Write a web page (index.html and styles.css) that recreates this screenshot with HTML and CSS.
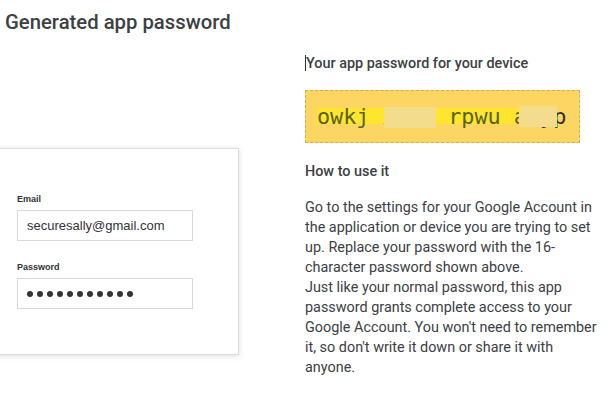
FILE: index.html
```html
<!DOCTYPE html>
<html lang="en">
<head>
  <meta charset="UTF-8" />
  <title>Generated app password</title>
  <link rel="stylesheet" href="styles.css">
</head>
<body>
  <h1 class="page-title">Generated app password</h1>
  <div class="layout">
    <div class="left-col">
      <div class="login-card">
        <div class="field-label">Email</div>
        <div class="field-box">securesally@gmail.com</div>
        <div class="field-label second">Password</div>
        <div class="field-box dots">
          <span></span><span></span><span></span><span></span><span></span><span></span>
          <span></span><span></span><span></span><span></span><span></span>
        </div>
      </div>
    </div>
    <div class="right-col">
      <h2 class="sub-title"><span class="caret"></span>Your app password for your device</h2>
      <div class="pw-box">
        <span class="pw-text"><span class="marker">owkj xxgx rpwu a</span>xyp</span>
        <span class="blur blur-one"></span>
        <span class="blur blur-two"></span>
      </div>
      <h2 class="sub-title how">How to use it</h2>
      <p class="how-text">
        Go to the settings for your Google Account in the application or device you are trying to set up. Replace your password with the 16-character password shown above.<br>
        Just like your normal password, this app password grants complete access to your Google Account. You won't need to remember it, so don't write it down or share it with anyone.
      </p>
    </div>
  </div>
</body>
</html>
```

FILE: styles.css
```css
body {
  margin: 0;
  background: #fff;
  font-family: Roboto, "Noto Sans", sans-serif;
  color: #3c4043;
  overflow: hidden;
}

.page-title {
  font-size: 20.3px;
  font-weight: 500;
  line-height: 24px;
  margin: 10px 0 0 5px;
  color: #3c4043;
}

.layout {
  display: flex;
}

.left-col {
  width: 305px;
  flex-shrink: 0;
}

.login-card {
  margin: 114px 0 0 -12px;
  width: 251px;
  height: 207px;
  box-sizing: border-box;
  padding: 44px 0 0 28px;
  background: #fff;
  border: 1px solid #dcdcdc;
  box-shadow: 0 1px 6px rgba(0,0,0,0.14);
  font-family: "Liberation Sans", Arial, sans-serif;
  color: #333;
}

.field-label {
  font-size: 9px;
  font-weight: bold;
  line-height: 12px;
  margin-bottom: 5px;
}

.field-label.second {
  margin-top: 20px;
}

.field-box {
  width: 176px;
  height: 31px;
  box-sizing: border-box;
  border: 1px solid #d9d9d9;
  padding-left: 9px;
  font-size: 13px;
  line-height: 29px;
}

.dots {
  display: flex;
  align-items: center;
  gap: 4px;
}

.dots span {
  width: 6px;
  height: 6px;
  border-radius: 50%;
  background: #333;
}

.right-col {
  width: 295px;
  padding-top: 20px;
}

.sub-title {
  font-size: 14.4px;
  font-weight: 500;
  line-height: 20px;
  margin: 0;
  color: #3c4043;
}

.caret {
  display: inline-block;
  width: 1px;
  height: 16px;
  background: #333;
  vertical-align: -3px;
}

.pw-box {
  position: relative;
  margin-top: 16px;
  width: 275px;
  height: 53px;
  box-sizing: border-box;
  border: 1px dashed #d4ae4a;
  background: #fdd562;
  display: flex;
  align-items: center;
  padding-left: 11px;
}

.pw-text {
  font-family: "DejaVu Sans Mono", monospace;
  font-size: 21.8px;
  line-height: 26px;
  color: #2a3038;
  white-space: pre;
}

.marker {
  color: #5a6122;
  background: linear-gradient(to bottom, transparent 17%, #ffe62e 17%, #ffe62e 80%, transparent 80%);
}

.blur {
  position: absolute;
  background: #f3dd8c;
}

.blur-one {
  left: 78px;
  top: 16px;
  width: 52px;
  height: 21px;
}

.blur-two {
  left: 213px;
  top: 15px;
  width: 38px;
  height: 21px;
}

.sub-title.how {
  margin-top: 19px;
}

.how-text {
  margin: 16px 0 0;
  font-size: 14.4px;
  line-height: 20px;
  width: 293px;
}
```
